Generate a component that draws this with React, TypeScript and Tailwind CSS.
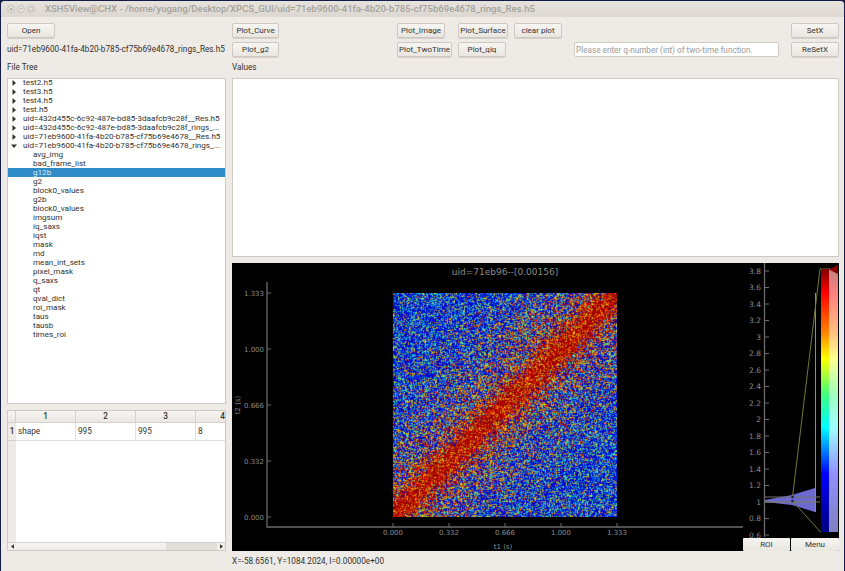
import React, { useEffect, useRef } from 'react';

const treeFiles = [
  { name: 'test2.h5' },
  { name: 'test3.h5' },
  { name: 'test4.h5' },
  { name: 'test.h5' },
  { name: 'uid=432d455c-6c92-487e-bd85-3daafcb9c28f__Res.h5' },
  { name: 'uid=432d455c-6c92-487e-bd85-3daafcb9c28f_rings_...' },
  { name: 'uid=71eb9600-41fa-4b20-b785-cf75b69e4678__Res.h5' },
  { name: 'uid=71eb9600-41fa-4b20-b785-cf75b69e4678_rings_...', open: true },
];

const treeChildren = [
  'avg_img', 'bad_frame_list', 'g12b', 'g2', 'block0_values', 'g2b', 'block0_values', 'imgsum', 'iq_saxs', 'iqst',
  'mask', 'md', 'mean_int_sets', 'pixel_mask', 'q_saxs', 'qt', 'qval_dict', 'roi_mask', 'taus', 'tausb', 'times_roi',
];

const mainTicks = [
  { label: '0.000', pos: 0 },
  { label: '0.332', pos: 1 },
  { label: '0.666', pos: 2 },
  { label: '1.000', pos: 3 },
  { label: '1.333', pos: 4 },
];

const histTicks = ['3.8', '3.6', '3.4', '3.2', '3', '2.8', '2.6', '2.4', '2.2', '2', '1.8', '1.6', '1.4', '1.2', '1', '0.8', '0.6'];

const Btn: React.FC<{ className: string; children: React.ReactNode }> = ({ className, children }) => (
  <button className={`${className} h-[15px] shrink-0 whitespace-nowrap rounded-[2px] border border-[#cdc9c2] bg-gradient-to-b from-[#f7f5f2] to-[#e9e6e0] text-[8px] leading-[13px] text-[#33322e] shadow-[0_1px_0_#d5d1ca]`}>
    {children}
  </button>
);

function jet(v: number): [number, number, number] {
  const c = (x: number) => Math.max(0, Math.min(1, x));
  return [c(1.5 - Math.abs(4 * v - 3)) * 255, c(1.5 - Math.abs(4 * v - 2)) * 255, c(1.5 - Math.abs(4 * v - 1)) * 255];
}

const Heatmap: React.FC = () => {
  const ref = useRef<HTMLCanvasElement>(null);

  useEffect(() => {
    const ctx = ref.current?.getContext('2d');
    if (!ctx) return;
    const size = 224;
    let seed = 12345;
    const rnd = () => {
      seed = (seed * 1664525 + 1013904223) % 4294967296;
      return seed / 4294967296;
    };
    // raw noise first, then soften it because the screenshot was scaled down
    const raw: [number, number, number][] = [];
    for (let y = 0; y < size; y++) {
      for (let x = 0; x < size; x++) {
        const d = Math.abs(x - (size - 1 - y)) / (size - 1);
        const hot = 0.62 * Math.exp(-Math.pow(d / 0.1, 2));
        const warm = 0.42 * Math.exp(-Math.pow(d / 0.38, 2));
        const u = rnd();
        let v: number;
        if (u < hot) v = 0.9 + 0.1 * rnd();
        else if (u < hot + warm) v = 0.62 + 0.3 * rnd();
        else v = 0.09 + 0.72 * Math.pow(rnd(), 3.4);
        raw.push(jet(v));
      }
    }
    const img = ctx.createImageData(size, size);
    for (let y = 0; y < size; y++) {
      for (let x = 0; x < size; x++) {
        const i = y * size + x;
        const l = raw[x > 0 ? i - 1 : i];
        const r = raw[x < size - 1 ? i + 1 : i];
        const t = raw[y > 0 ? i - size : i];
        const b = raw[y < size - 1 ? i + size : i];
        for (let k = 0; k < 3; k++) {
          img.data[i * 4 + k] = 0.88 * (0.5 * raw[i][k] + 0.125 * (l[k] + r[k] + t[k] + b[k]));
        }
        img.data[i * 4 + 3] = 255;
      }
    }
    ctx.putImageData(img, 0, 0);
  }, []);

  return <canvas ref={ref} width={224} height={224} className="absolute left-[161px] top-[30px] h-[224px] w-[224px]" />;
};

const PlotPanel: React.FC = () => {
  const axis = '#6b6b6b';
  const label = '#8a8a8a';
  const tickY = (v: string) => 271 + (3.8 - parseFloat(v)) * 82.5;

  return (
    <div className="relative mt-[6px] h-[288px] bg-black">
      <svg viewBox="232 263 607 288" className="absolute inset-0 h-[288px] w-[607px]" fontFamily="'DejaVu Sans', sans-serif">
        <text x="505" y="275" fontSize="9" fill={label} textAnchor="middle">uid=71eb96--[0.00156]</text>

        <path d="M267 282V527H743" stroke={axis} strokeWidth="1.3" fill="none" />
        {mainTicks.map(t => {
          const y = 517 - t.pos * 56;
          const x = 393 + t.pos * 56;
          return (
            <g key={t.label}>
              <path d={`M267 ${y}H271M${x} 527V523`} stroke={axis} />
              <text x="264" y={y + 2.5} fontSize="7" fill={label} textAnchor="end">{t.label}</text>
              <text x={x} y="534.5" fontSize="7" fill={label} textAnchor="middle">{t.label}</text>
            </g>
          );
        })}
        <text x="503" y="549" fontSize="7" fill={label} textAnchor="middle">t1 (s)</text>
        <text transform="translate(239.5 405) rotate(-90)" fontSize="7" fill={label} textAnchor="middle">t2 (s)</text>

        <path d="M764.5 263V537" stroke={axis} strokeWidth="1.3" />
        {histTicks.map(t => (
          <g key={t}>
            <path d={`M764.5 ${tickY(t)}H769`} stroke={axis} />
            <text x="761" y={tickY(t) + 2.5} fontSize="7.5" fill={label} textAnchor="end">{t}</text>
          </g>
        ))}

        <path d="M815.5 293V512" stroke="#8c8c8c" />
        <path d="M765 500L792 495L815 488V512L792 505L765 502Z" fill="#6a6ad0" />
        <path d="M765 497H820" stroke="#77706a" strokeWidth="1.2" />
        <path d="M765 502H820" stroke="#80804a" />
        <path d="M830 269H820L792.5 497M792.5 501L820 531.5H830" stroke="#77773a" fill="none" />
        <circle cx="792.5" cy="497" r="1.3" fill="#222244" />
        <circle cx="792.5" cy="501" r="1.3" fill="#222244" />
      </svg>

      <Heatmap />

      <div className="absolute left-[589px] top-[6px] flex h-[263px] w-[17px]">
        <div className="w-[8px] bg-[linear-gradient(to_bottom,#800000_0%,#ff0000_9%,#ff8000_24%,#ffff00_34%,#40ff80_48%,#00ffff_60%,#0000ff_78%,#000080_100%)]" />
        <div className="w-[9px] bg-[linear-gradient(to_bottom,#c08080_0%,#ff8080_9%,#ffc080_24%,#ffff90_34%,#a0ffc0_48%,#a0ffff_60%,#9090ff_78%,#8080c0_100%)]" />
      </div>
      <svg viewBox="0 0 9 9" className="absolute left-[597px] top-[2px] h-[9px] w-[9px]">
        <path d="M9 0V9L0 4.5Z" fill="#8a0000" />
      </svg>

      <div className="absolute bottom-0 right-0 flex">
        <button className="h-[13px] w-[47px] rounded-[1px] bg-gradient-to-b from-[#f7f5f2] to-[#e9e6e0] text-[8px] leading-[13px] text-[#33322e]">ROI</button>
        <button className="ml-[1px] h-[13px] w-[48px] rounded-[1px] bg-gradient-to-b from-[#f7f5f2] to-[#e9e6e0] text-[8px] leading-[13px] text-[#33322e]">Menu</button>
      </div>
    </div>
  );
};

const Arrow: React.FC<{ open?: boolean }> = ({ open }) => (
  <svg viewBox="0 0 6 6" className="ml-[3px] mr-[6px] h-[6px] w-[6px] shrink-0">
    <path d={open ? 'M0 1.5H6L3 5Z' : 'M1.5 0L5 3L1.5 6Z'} fill="#33322e" />
  </svg>
);

const FileTree: React.FC = () => (
  <div className="h-[326px] border border-[#cfcbc4] bg-white text-[8.1px] leading-[9px] text-[#33322e]">
    <div className="-mt-[1px]">
      {treeFiles.map(f => (
        <div key={f.name} className="flex h-[9px] items-center whitespace-nowrap">
          <Arrow open={f.open} />
          {f.name}
        </div>
      ))}
      {treeChildren.map((c, i) => (
        <div key={i} className={`h-[9px] whitespace-nowrap pl-[25px] ${c === 'g12b' ? 'bg-[#308cc6] text-[#dcebf5]' : ''}`}>
          {c}
        </div>
      ))}
    </div>
  </div>
);

const ValueTable: React.FC = () => (
  <div className="mt-[6px] flex h-[141px] flex-col overflow-hidden border border-[#cfcbc4] bg-white text-[8.2px] text-[#33322e]">
    <div className="flex h-[12px] shrink-0 border-b border-[#d5d1ca] bg-gradient-to-b from-[#f6f4f1] to-[#ebe8e3] font-medium leading-[11px]">
      <div className="w-[8px] border-r border-[#d5d1ca]" />
      {['1', '2', '3'].map(h => (
        <div key={h} className="w-[60px] border-r border-[#d5d1ca] text-center">{h}</div>
      ))}
      <div className="flex-1 text-right">4</div>
    </div>
    <div className="flex min-h-0 flex-1">
      <div className="w-[8px] shrink-0 bg-[#eeebe6]">
        <div className="h-[18px] border-b border-[#d5d1ca] text-center font-medium leading-[17px]">1</div>
      </div>
      <div className="flex h-[18px] flex-1 border-b border-[#e4e1dc] leading-[17px]">
        {['shape', '995', '995'].map((v, i) => (
          <div key={i} className="w-[60px] border-r border-[#e4e1dc] pl-[2px]">{v}</div>
        ))}
        <div className="flex-1 pl-[2px]">8</div>
      </div>
    </div>
    <div className="flex h-[8px] shrink-0 items-center border-t border-[#d5d1ca] bg-[#e2dfda]">
      <div className="flex h-full w-[8px] items-center justify-center bg-[#f1efeb]">
        <svg viewBox="0 0 4 6" className="h-[5px] w-[3px]"><path d="M4 0V6L0 3Z" fill="#33322e" /></svg>
      </div>
      <div className="h-full w-[150px] bg-gradient-to-b from-[#f7f5f2] to-[#efece8]" />
      <div className="flex-1" />
      <div className="flex h-full w-[8px] items-center justify-center bg-[#f1efeb]">
        <svg viewBox="0 0 4 6" className="h-[5px] w-[3px]"><path d="M0 0V6L4 3Z" fill="#33322e" /></svg>
      </div>
    </div>
  </div>
);

const App: React.FC = () => {
  return (
    <div className="h-[571px] w-[845px] overflow-hidden bg-[#141c4a] pl-[1px] pr-[1px] pt-[1px] font-['Roboto',sans-serif]">
      <div className="flex h-[570px] flex-col rounded-t-[4px] bg-[#eeebe6]">
        <div className="flex h-[16px] shrink-0 items-center rounded-t-[4px] bg-gradient-to-b from-[#e6e2dc] to-[#dcd8d1] pl-[6px]">
          {['×', '−', '□'].map(s => (
            <span key={s} className="mr-[2px] flex h-[8px] w-[8px] items-center justify-center rounded-full border border-[#c8c4bd] bg-[#e4e0da] text-[6px] leading-none text-[#8d8a84]">{s}</span>
          ))}
          <span className="ml-[8px] whitespace-nowrap text-[9.5px] font-medium text-[#a5a29b]">XSH5View@CHX - /home/yugang/Desktop/XPCS_GUI/uid=71eb9600-41fa-4b20-b785-cf75b69e4678_rings_Res.h5</span>
        </div>

        <div className="mt-[6px] flex pl-[6px] pr-[5px]">
          <Btn className="w-[48px]">Open</Btn>
          <Btn className="ml-[177px] w-[47px]">Plot_Curve</Btn>
          <Btn className="ml-[118px] w-[48px]">Plot_Image</Btn>
          <Btn className="ml-[13px] w-[50px]">Plot_Surface</Btn>
          <Btn className="ml-[6px] w-[48px]">clear plot</Btn>
          <Btn className="ml-auto w-[48px]">SetX</Btn>
        </div>

        <div className="mt-[4px] flex items-center pl-[6px] pr-[5px]">
          <div className="w-[225px] shrink-0 whitespace-nowrap text-[8.2px] text-[#33322e]">uid=71eb9600-41fa-4b20-b785-cf75b69e4678_rings_Res.h5</div>
          <Btn className="w-[47px]">Plot_g2</Btn>
          <Btn className="ml-[118px] w-[55px]">Plot_TwoTime</Btn>
          <Btn className="ml-[6px] w-[48px]">Plot_qiq</Btn>
          <input
            readOnly
            placeholder="Please enter q-number (int) of two-time function."
            className="ml-[68px] h-[15px] w-[205px] rounded-[2px] border border-[#cfcbc4] bg-white px-[1px] text-[8.2px] outline-none placeholder:text-[#9a9a9a]"
          />
          <Btn className="ml-auto w-[48px]">ReSetX</Btn>
        </div>

        <div className="mt-[5px] flex h-[10px] pl-[6px] text-[8.2px] leading-[10px] text-[#33322e]">
          <div className="w-[225px]">File Tree</div>
          <div>Values</div>
        </div>

        <div className="mt-[6px] flex pl-[6px] pr-[5px]">
          <div className="w-[219px] shrink-0">
            <FileTree />
            <ValueTable />
          </div>
          <div className="ml-[6px] min-w-0 flex-1">
            <div className="h-[179px] border border-[#cfcbc4] bg-white" />
            <PlotPanel />
          </div>
        </div>

        <div className="pl-[231px] pt-[5px] text-[8.2px] leading-[10px] text-[#33322e]">X=-58.6561, Y=1084.2024, I=0.00000e+00</div>
      </div>
    </div>
  );
};

export default App;
